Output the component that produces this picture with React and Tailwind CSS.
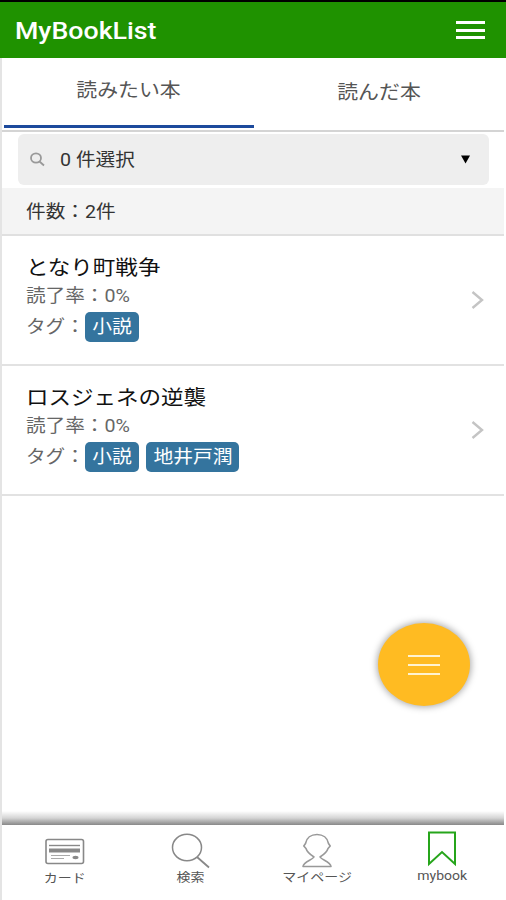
const books = [
  { id: 1, title: 'となり町戦争', rate: 0, tags: [{ name: '小説', width: 'w-[54px]' }] },
  {
    id: 2,
    title: 'ロスジェネの逆襲',
    rate: 0,
    tags: [
      { name: '小説', width: 'w-[54px]' },
      { name: '地井戸潤', width: 'w-[93px]' },
    ],
  },
]

const Header = () => (
  <header className="flex h-[58px] shrink-0 items-center justify-between border-t-2 border-black bg-[#1f9200] pl-[15px] pr-[21px]">
    <h1 className="origin-left scale-x-[1.1] pt-[2px] text-[24.3px] font-medium text-white">MyBookList</h1>
    <button className="flex w-[29px] flex-col gap-[4.5px]" aria-label="menu">
      <span className="h-[3px] w-full bg-white" />
      <span className="h-[3px] w-full bg-white" />
      <span className="h-[3px] w-full bg-white" />
    </button>
  </header>
)

const Tabs = () => (
  <div className="flex h-[74px] shrink-0 border-b-2 border-[#d4d4d4] text-[19px] text-[#555]">
    <div className="mb-[2px] ml-[2px] flex w-[250px] items-center justify-center border-b-[3px] border-[#1d4a9c]">
      <span className="scale-x-[1.1]">読みたい本</span>
    </div>
    <div className="flex w-[250px] items-center justify-center pb-[2px]">
      <span className="scale-x-[1.1]">読んだ本</span>
    </div>
  </div>
)

const TagSelect = () => (
  <div className="mx-4 mt-[2px] mb-[3px] flex h-[51px] w-[471px] shrink-0 items-center rounded-md bg-[#eee] pl-[12px] pr-[19px]">
    <svg width="15" height="15" viewBox="0 0 15 15" fill="none" stroke="#999" strokeWidth="1.8">
      <ellipse cx="6" cy="6" rx="5" ry="4.7" />
      <path d="M9.5 9.5l4.5 4" />
    </svg>
    <span className="ml-[15px] origin-left scale-x-[1.09] text-[18px] text-[#333]">0 件選択</span>
    <svg className="ml-auto" width="9" height="9" viewBox="0 0 9 9" fill="#000">
      <path d="M0 0.5h9l-4.5 8z" />
    </svg>
  </div>
)

const BookRow = ({ book }) => (
  <li className="flex h-[130px] items-center justify-between border-b-2 border-[#e2e2e2] pl-[24px] pr-[20px]">
    <div className="flex flex-col pb-[4px] text-[18px] text-[#666]">
      <span className="h-[29px] origin-left scale-x-[1.11] text-[20.3px] leading-[29px] text-[#111]">{book.title}</span>
      <span className="h-[26px] origin-left scale-x-[1.09] leading-[25px]">読了率：{book.rate}%</span>
      <div className="mt-[2px] flex h-[31px] items-center">
        <span className="w-[59px] shrink-0">
          <span className="inline-block origin-left scale-x-[1.09] leading-[30px]">タグ：</span>
        </span>
        <div className="flex gap-[7px]">
          {book.tags.map((tag) => (
            <span
              key={tag.name}
              className={`flex h-[30px] items-center justify-center rounded-[5px] bg-[#34749e] text-white ${tag.width}`}
            >
              <span className="shrink-0 scale-x-[1.1] whitespace-nowrap leading-[28px]">{tag.name}</span>
            </span>
          ))}
        </div>
      </div>
    </div>
    <svg width="13" height="20" viewBox="0 0 13 20" fill="none" stroke="#c4c4c4" strokeWidth="2.4">
      <path d="M1.5 2l9.5 8-9.5 8" />
    </svg>
  </li>
)

const CardIcon = () => (
  <svg width="40" height="34" viewBox="0 0 40 34" fill="none" stroke="#888">
    <rect x="1" y="5.5" width="37.5" height="24" rx="2" strokeWidth="1.6" />
    <path d="M4 11.5h31" strokeWidth="1.4" />
    <path d="M4 16.5h31" strokeWidth="4" />
    <path d="M6 21.5h19M6 24.5h13" stroke="#aaa" strokeWidth="1.2" />
    <ellipse cx="30.5" cy="23.5" rx="3" ry="1.7" fill="#888" stroke="none" />
  </svg>
)

const SearchIcon = () => (
  <svg width="40" height="36" viewBox="0 0 40 36" fill="none" stroke="#888" strokeWidth="1.5">
    <ellipse cx="17" cy="14.5" rx="14.5" ry="13.2" />
    <path d="M27 24l12 10.5" strokeWidth="1.8" />
  </svg>
)

const PersonIcon = () => (
  <svg width="32" height="36" viewBox="0 0 32 36" fill="none" stroke="#999" strokeWidth="1.6" strokeLinejoin="round">
    <path d="M13 24C9 21.5 6 19 5 15.5L2.8 13L4.5 10.500C5.500 5 10 1.500 16 1.500S26.500 5 27.500 10.500L29.200 13L27 15.500C26 19 23 21.500 19 24C20.500 27 29.500 28.500 30 33.500H2C2.500 28.500 11.500 27 13 24Z" />
  </svg>
)

const BookmarkIcon = () => (
  <svg width="30" height="36" viewBox="0 0 30 36" fill="none" stroke="#26a51b" strokeWidth="2">
    <path d="M2 1.500h26v31.500l-13-12-13 12z" />
  </svg>
)

const navItems = [
  { label: 'カード', Icon: CardIcon, offset: 'pt-[9px]' },
  { label: '検索', Icon: SearchIcon, offset: 'pt-[8px]' },
  { label: 'マイページ', Icon: PersonIcon, offset: 'pt-[8px] pl-[2px]' },
  { label: 'mybook', Icon: BookmarkIcon, offset: 'pt-[6px] pl-[2px]' },
]

const BottomNav = () => (
  <nav className="shrink-0">
    <div className="h-[14px] bg-gradient-to-b from-white via-[#d5d5d5] to-[#888]" />
    <div className="grid h-[75px] grid-cols-4 bg-white">
      {navItems.map(({ label, Icon, offset }) => (
        <div key={label} className={`flex flex-col items-center ${offset}`}>
          <div className="flex h-[36px] items-start">
            <Icon />
          </div>
          <span className="scale-x-[1.12] whitespace-nowrap text-[12.500px] leading-[17px] text-[#555]">{label}</span>
        </div>
      ))}
    </div>
  </nav>
)

const App = () => {
  return (
    <div className="relative flex h-[900px] w-[506px] flex-col overflow-hidden bg-white font-['Roboto','Noto_Sans_CJK_JP',sans-serif]">
      <Header />
      <main className="flex min-h-0 flex-1 flex-col border-x-2 border-l-[#e4e4e4] border-r-white">
        <Tabs />
        <TagSelect />
        <div className="flex h-[48px] shrink-0 items-center border-b-2 border-[#e0e0e0] bg-[#f4f4f4] pt-[2px] pl-[24px] text-[17.700px] text-[#333]">
          <span className="origin-left scale-x-[1.11]">件数：2件</span>
        </div>
        <ul>
          {books.map((book) => (
            <BookRow key={book.id} book={book} />
          ))}
        </ul>
        <div className="mt-auto">
          <BottomNav />
        </div>
      </main>

      {/* Floating menu button */}
      <button
        className="absolute left-[378px] top-[623px] flex h-[83px] w-[92px] flex-col items-center justify-center gap-[7px] rounded-[50%] bg-[#ffbb22] shadow-[0_0_7px_1px_rgba(0,0,0,0.35)]"
        aria-label="actions"
      >
        <span className="h-[2px] w-[32px] bg-[#fff3d0]" />
        <span className="h-[2px] w-[32px] bg-[#fff3d0]" />
        <span className="h-[2px] w-[32px] bg-[#fff3d0]" />
      </button>
    </div>
  )
}

export default App
